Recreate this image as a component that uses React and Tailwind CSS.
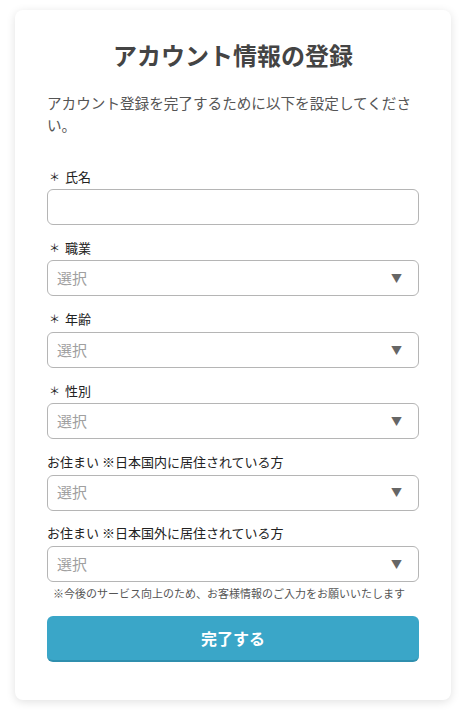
import React from "react";

const font = { fontFamily: '"Noto Sans CJK JP", "Noto Sans", sans-serif' };

function Label({ required, children }) {
  return (
    <div className="flex items-center h-[18px] mb-[4px] text-[13px] font-normal text-[#222] leading-none">
      {required && <span className="text-[11px] mr-[5px] ml-[2px]">＊</span>}
      <span>{children}</span>
    </div>
  );
}

function Select() {
  return (
    <div className="flex items-center justify-between h-[36px] px-[9px] rounded-[6px] border border-[#b5b5b5] bg-white">
      <span className="text-[15px] text-[#a0a0a0]">選択</span>
      <span className="text-[11px] text-[#666] mr-[7px]">▼</span>
    </div>
  );
}

export default function App() {
  const fields = [
    { label: "職業", required: true },
    { label: "年齢", required: true },
    { label: "性別", required: true },
    { label: "お住まい ※日本国内に居住されている方" },
    { label: "お住まい ※日本国外に居住されている方" },
  ];
  return (
    <div className="min-h-[720px] bg-white pt-[10px] px-[15px]" style={font}>
      <div className="w-[436px] h-[690px] rounded-[8px] bg-white shadow-[0_2px_10px_rgba(0,0,0,0.12)] px-[32px] pt-[30px]">
        <h1 className="text-center text-[24px] font-bold text-[#444] leading-[30px]">アカウント情報の登録</h1>
        <p className="mt-[22px] text-[14.6px] text-[#555] leading-[22px]">
          アカウント登録を完了するために以下を設定してください。
        </p>
        <div className="mt-[31px]">
          <Label required>氏名</Label>
          <div className="h-[36px] rounded-[6px] border border-[#b5b5b5] bg-white" />
        </div>
        {fields.map((f) => (
          <div key={f.label} className="mt-[13.4px]">
            <Label required={f.required}>{f.label}</Label>
            <Select />
          </div>
        ))}
        <p className="mt-[3px] ml-[6px] text-[11px] text-[#555] leading-[16px]">
          ※今後のサービス向上のため、お客様情報のご入力をお願いいたします
        </p>
        <button className="mt-[15px] w-full h-[46px] rounded-[6px] bg-[#3aa6c8] border-b-2 border-[#2f8fae] text-white text-[16px] font-bold">
          完了する
        </button>
      </div>
    </div>
  );
}
